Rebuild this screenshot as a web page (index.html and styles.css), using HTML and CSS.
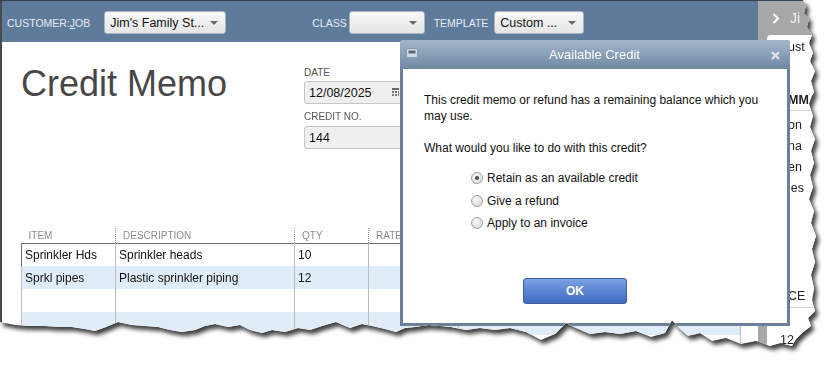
FILE: index.html
```html
<!DOCTYPE html>
<html lang="en">
<head>
  <meta charset="UTF-8" />
  <meta name="viewport" content="width=device-width, initial-scale=1" />
  <title>Credit Memo - Available Credit</title>
  <link rel="stylesheet" href="styles.css">
</head>
<body>

<div class="shot">
  <div class="frame">
    <div class="main">
      <header class="topbar">
        <span class="bar-label">CUSTOMER:<u>J</u>OB</span>
        <div class="combo combo-customer"><span>Jim's Family St...</span><i class="caret"></i></div>
        <span class="bar-label label-class">CLASS</span>
        <div class="combo combo-class"><span></span><i class="caret"></i></div>
        <span class="bar-label label-template">TEMPLATE</span>
        <div class="combo combo-template"><span>Custom ...</span><i class="caret"></i></div>
      </header>

      <section class="memo">
        <div class="memo-head">
          <h1 class="memo-title">Credit Memo</h1>
          <div class="memo-fields">
            <label class="field-label">DATE</label>
            <div class="field">
              <span>12/08/2025</span>
              <svg class="cal" width="7" height="10" viewBox="0 0 7 10">
                <rect x="0" y="0" width="7" height="2" fill="#6a6a6a"/>
                <rect x="0" y="3" width="2" height="2" fill="#7a7a7a"/>
                <rect x="3" y="3" width="2" height="2" fill="#7a7a7a"/>
                <rect x="0" y="6" width="2" height="2" fill="#7a7a7a"/>
                <rect x="3" y="6" width="2" height="2" fill="#7a7a7a"/>
                <rect x="6" y="3" width="1" height="5" fill="#7a7a7a"/>
              </svg>
            </div>
            <label class="field-label second">CREDIT NO.</label>
            <div class="field"><span>144</span></div>
          </div>
        </div>

        <table class="items">
          <thead>
            <tr>
              <th class="c-item">ITEM</th>
              <th class="c-desc">DESCRIPTION</th>
              <th class="c-qty">QTY</th>
              <th class="c-rate">RATE</th>
              <th class="c-amt">AMOUNT</th>
            </tr>
          </thead>
          <tbody>
            <tr class="current"><td>Sprinkler Hds</td><td>Sprinkler heads</td><td>10</td><td></td><td></td></tr>
            <tr class="alt"><td>Sprkl pipes</td><td>Plastic sprinkler piping</td><td>12</td><td></td><td></td></tr>
            <tr><td></td><td></td><td></td><td></td><td></td></tr>
            <tr class="alt"><td></td><td></td><td></td><td></td><td></td></tr>
            <tr><td></td><td></td><td></td><td></td><td></td></tr>
          </tbody>
        </table>
      </section>
    </div>

    <aside class="side">
      <div class="side-top">
        <svg class="chev" width="8" height="11" viewBox="0 0 8 11"><polyline points="1.5,1 6,5.5 1.5,10" fill="none" stroke="#fff" stroke-width="2"/></svg>
        <span class="side-name">Ji</span>
      </div>
      <div class="side-box">
        <div class="s-top">ust</div>
        <div class="s-head">MMA</div>
        <div class="s-list">
          <div>on</div>
          <div>na</div>
          <div>en</div>
          <div>les</div>
        </div>
        <div class="s-head s-foot">CE</div>
        <div class="s-num">12</div>
      </div>
    </aside>

    <div class="dialog">
      <div class="dlg-title">
        <svg class="dlg-icon" width="12" height="10" viewBox="0 0 12 10">
          <rect x="0.5" y="0.5" width="11" height="9" rx="1.5" fill="#d3dbe3" stroke="#8797a8"/>
          <rect x="2.5" y="2.5" width="7" height="3" fill="#5a6b7e"/>
        </svg>
        <span class="dlg-caption">Available Credit</span>
        <svg class="dlg-close" width="9" height="9" viewBox="0 0 9 9">
          <path d="M1 1 L8 8 M8 1 L1 8" stroke="#dfe6ed" stroke-width="2.2"/>
        </svg>
      </div>
      <div class="dlg-body">
        <p>This credit memo or refund has a remaining balance which you<br>may use.</p>
        <p class="question">What would you like to do with this credit?</p>
        <div class="options">
          <label class="option"><input type="radio" name="credit" checked> Retain as an available credit</label>
          <label class="option"><input type="radio" name="credit"> Give a refund</label>
          <label class="option"><input type="radio" name="credit"> Apply to an invoice</label>
        </div>
        <button class="ok-btn" type="button">OK</button>
      </div>
    </div>
  </div>
</div>

</body>
</html>
```

FILE: styles.css
```css
body {
  margin: 0;
  background: #fff;
  font-family: "Liberation Sans", Arial, sans-serif;
  color: #111;
}
.shot {
  width: 839px;
  height: 366px;
  filter: drop-shadow(3px 4px 2px rgba(0,0,0,0.75));
}
.frame {
  position: relative;
  display: flex;
  width: 820px;
  height: 350px;
  box-sizing: border-box;
  background: #fff;
  border-top: 1px solid #34414e;
  clip-path: polygon(0 0, 803px 0, 806px 6px, 804px 13px, 809px 19px, 807px 27px, 812px 35px, 809px 43px, 813px 53px, 810px 61px, 815px 71px, 811px 81px, 814px 92px, 809px 104px, 813px 116px, 810px 127px, 815px 139px, 811px 151px, 814px 163px, 810px 175px, 813px 187px, 809px 199px, 814px 211px, 811px 223px, 816px 236px, 812px 249px, 815px 262px, 811px 275px, 814px 288px, 812px 300px, 815px 311px, 808px 318px, 811px 326px, 802px 333px, 796px 339px, 792px 346px, 780px 343px, 770px 346px, 756px 341px, 741px 344px, 726px 338px, 712px 341px, 700px 333px, 688px 336px, 680px 329px, 672px 320px, 665px 333px, 651px 337px, 636px 331px, 620px 334px, 605px 332px, 590px 334px, 576px 328px, 566px 323px, 555px 334px, 541px 340px, 526px 332px, 510px 328px, 495px 330px, 480px 328px, 466px 330px, 451px 327px, 440px 326px, 429px 325px, 415px 327px, 405px 328px, 396px 332px, 385px 329px, 372px 326px, 362px 324px, 350px 328px, 336px 322px, 322px 326px, 310px 330px, 298px 328px, 285px 332px, 272px 330px, 262px 333px, 250px 330px, 240px 325px, 228px 327px, 215px 324px, 205px 326px, 195px 330px, 182px 332px, 170px 330px, 158px 327px, 145px 326px, 132px 325px, 118px 322px, 106px 327px, 95px 331px, 85px 329px, 72px 327px, 60px 327px, 45px 326px, 30px 326px, 15px 325px, 5px 323px, 0 322px);
}

/* main form */
.main {
  flex: none;
  width: 758px;
  box-sizing: border-box;
  border-left: 2px solid #4a4a4a;
}
.topbar {
  display: flex;
  align-items: center;
  height: 41px;
  box-sizing: border-box;
  padding: 2px 0 0 5px;
  background: #5e7b9c;
}
.bar-label {
  color: #e8edf2;
  font-size: 10.5px;
}
.bar-label u {
  text-decoration-thickness: 1px;
}
.combo {
  display: flex;
  align-items: center;
  justify-content: space-between;
  height: 23px;
  box-sizing: border-box;
  padding: 0 7px 0 5px;
  border: 1px solid #a9b5c2;
  border-radius: 3px;
  background: linear-gradient(#f8f8f8, #e5e5e5);
  font-size: 12.5px;
  color: #111;
}
.caret {
  width: 0;
  height: 0;
  border-left: 4px solid transparent;
  border-right: 4px solid transparent;
  border-top: 4px solid #6a6a6a;
}
.combo-customer { width: 122px; margin-left: 14px; }
.label-class { margin-left: 86px; }
.combo-class { width: 76px; margin-left: 2px; }
.label-template { margin-left: 9px; }
.combo-template { width: 90px; margin-left: 6px; }

.memo-head {
  display: flex;
}
.memo-title {
  flex: none;
  width: 302px;
  box-sizing: border-box;
  margin: 24px 0 0;
  padding-left: 19px;
  font-size: 36px;
  line-height: 36px;
  font-weight: normal;
  color: #474747;
}
.memo-fields {
  margin-top: 25px;
}
.field-label {
  display: block;
  font-size: 10px;
  line-height: 12px;
  color: #555;
}
.field-label.second {
  margin-top: 7px;
}
.field {
  display: flex;
  align-items: center;
  width: 110px;
  height: 23px;
  box-sizing: border-box;
  margin-top: 2px;
  padding: 0 14px 0 4px;
  border: 1px solid #c6c6c6;
  border-radius: 3px;
  background: #efefef;
  font-size: 12.5px;
}
.field-label.second + .field {
  margin-top: 3px;
}
.cal {
  margin-left: auto;
}

.items {
  margin: 79px 0 0 19px;
  width: 720px;
  border-collapse: collapse;
  table-layout: fixed;
  font-size: 12px;
}
.items th,
.items td {
  box-sizing: border-box;
}
.items th {
  height: 15px;
  padding: 0 0 0 7px;
  text-align: left;
  font-weight: normal;
  font-size: 10px;
  color: #8c8c8c;
  border-left: 1px dotted #9a9a9a;
}
.items th:first-child {
  border-left: none;
}
.c-item { width: 94px; }
.c-desc { width: 179px; }
.c-qty { width: 74px; }
.c-rate { width: 90px; }
.items td {
  height: 23px;
  padding: 0 3px;
  border-left: 1px solid #bcbcbc;
  border-right: 1px solid #bcbcbc;
  white-space: nowrap;
}
.items tr.current td {
  border-top: 1px solid #6e6e6e;
}
.items tr.current td:first-child {
  border-left-color: #6e6e6e;
}
.items tr.alt td {
  background: #e1ecf9;
}

/* side panel */
.side {
  flex: 1;
  display: flex;
  flex-direction: column;
  background: #a8a8a8;
  overflow: hidden;
}
.side-top {
  display: flex;
  align-items: center;
  height: 34px;
  padding-left: 14px;
  white-space: nowrap;
}
.chev {
  flex: none;
}
.side-name {
  margin-left: 10px;
  color: #f4f4f4;
  font-size: 14px;
}
.side-box {
  flex: 1;
  margin-left: 9px;
  padding-left: 21px;
  background: #fff;
  border-top-left-radius: 4px;
  font-size: 12.5px;
  color: #222;
  white-space: nowrap;
}
.s-top {
  margin-top: 4px;
  line-height: 16px;
}
.s-head {
  margin-top: 37px;
  padding-bottom: 2px;
  line-height: 16px;
  font-weight: bold;
  border-bottom: 1px solid #d4d4d4;
}
.s-list {
  margin-top: 3.5px;
  line-height: 21px;
}
.s-foot {
  margin-top: 89px;
  padding-bottom: 3px;
  font-weight: normal;
}
.s-num {
  margin: 24px 0 0 -8px;
  line-height: 16px;
}

/* dialog */
.dialog {
  position: absolute;
  left: 400px;
  top: 39px;
  display: flex;
  flex-direction: column;
  width: 390px;
  height: 286px;
  box-sizing: border-box;
  padding: 0 3px 3px;
  background: #6b8199;
  border-radius: 3px 3px 0 0;
}
.dlg-title {
  display: flex;
  align-items: center;
  height: 29px;
  margin: 0 -3px;
  padding: 0 10px 0 6px;
  background: linear-gradient(#a3b7cb, #6f88a3);
  border-radius: 3px 3px 0 0;
}
.dlg-icon {
  flex: none;
  margin-top: -3px;
}
.dlg-caption {
  flex: 1;
  text-align: center;
  color: #fff;
  font-size: 13px;
}
.dlg-close {
  flex: none;
  margin-top: 1px;
}
.dlg-body {
  flex: 1;
  padding: 23px 21px 0;
  background: #fff;
  font-size: 12px;
  color: #111;
}
.dlg-body p {
  margin: 0;
  line-height: 16px;
}
.dlg-body .question {
  margin-top: 16px;
}
.options {
  margin: 11px 0 0 47px;
}
.option {
  display: flex;
  align-items: center;
  gap: 4px;
  height: 22.5px;
}
.option input {
  appearance: none;
  display: grid;
  place-items: center;
  width: 12px;
  height: 12px;
  margin: 0;
  border: 1px solid #a2a2a2;
  border-radius: 50%;
  background: radial-gradient(circle at 40% 35%, #fafafa, #d2d2d2);
}
.option input:checked::after {
  content: "";
  width: 4px;
  height: 4px;
  border-radius: 50%;
  background: #4a4a4a;
}
.ok-btn {
  display: block;
  width: 104px;
  height: 26px;
  margin: 43px 0 0 99px;
  border: 1px solid #3d5d9e;
  border-radius: 3px;
  background: linear-gradient(#7aa2e2, #3f69c3);
  color: #fff;
  font-family: inherit;
  font-size: 12px;
  font-weight: bold;
}
```
